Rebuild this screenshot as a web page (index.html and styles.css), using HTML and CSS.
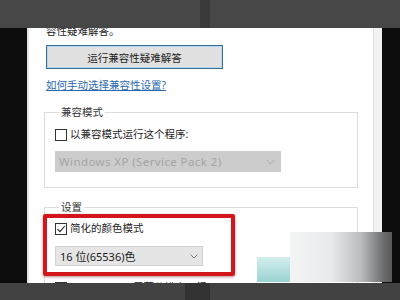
FILE: index.html
```html
<!DOCTYPE html>
<html lang="zh-CN">
<head>
    <meta charset="UTF-8">
    <title>兼容性设置</title>
    <link rel="stylesheet" href="styles.css">
</head>
<body>
    <div class="screen">
        <div class="topbar"><span class="seg"></span></div>

        <div class="middle">
            <div class="black left"></div>
            <div class="edge"></div>

            <div class="dialog">
                <p class="intro">容性疑难解答。</p>
                <button class="btn" type="button">运行兼容性疑难解答</button>
                <a class="link" href="#">如何手动选择兼容性设置?</a>

                <fieldset class="group">
                    <legend>兼容模式</legend>
                    <label class="check"><span class="box"></span>以兼容模式运行这个程序:</label>
                    <div class="select disabled">
                        <span>Windows XP (Service Pack 2)</span>
                        <svg width="9" height="6" viewBox="0 0 9 6"><path d="M0.5 0.8 L4.5 4.8 L8.5 0.8" fill="none" stroke="#a8a8a8" stroke-width="1"/></svg>
                    </div>
                </fieldset>

                <fieldset class="group settings">
                    <legend>设置</legend>
                    <div class="highlight">
                        <label class="check">
                            <span class="box">
                                <svg width="10" height="10" viewBox="0 0 10 10"><path d="M1.5 5.2 L4 7.7 L8.8 2" fill="none" stroke="#222" stroke-width="1.1"/></svg>
                            </span>简化的颜色模式</label>
                        <div class="select small">
                            <span>16 位(65536)色</span>
                            <svg width="8" height="5" viewBox="0 0 8 5"><path d="M0.5 0.6 L4 4 L7.5 0.6" fill="none" stroke="#777" stroke-width="1"/></svg>
                        </div>
                    </div>
                    <label class="check"><span class="box"></span>用 640 x 480 屏幕分辨率运行</label>
                </fieldset>
            </div>

            <div class="scroll"></div>
            <div class="black right"></div>
        </div>

        <div class="bottombar"><span class="seg"></span></div>

        <div class="mark-tail"></div>
        <div class="mark"></div>
    </div>
</body>
</html>
```

FILE: styles.css
```css
* {
    box-sizing: border-box;
}

body {
    margin: 0;
    background-color: #0d0d0d;
    font-family: "Noto Sans", "Noto Sans CJK SC", sans-serif;
    font-size: 10.5px;
    color: #1c1c1c;
}

.screen {
    position: relative;
    width: 400px;
    height: 300px;
    overflow: hidden;
    display: flex;
    flex-direction: column;
}

.topbar,
.bottombar {
    display: flex;
    flex-shrink: 0;
    background-color: #474747;
}

.topbar {
    height: 28px;
}

.topbar .seg {
    width: 10px;
    margin-left: 200px;
    background-color: #3a3a3a;
}

.bottombar {
    height: 17px;
    background-color: #424242;
}

.bottombar .seg {
    width: 25px;
    margin-left: 185px;
    background-color: #333;
}

.middle {
    display: flex;
    flex-shrink: 0;
    height: 255px;
    overflow: hidden;
}

.black {
    background-color: #0d0d0d;
}

.black.left {
    width: 27px;
}

.black.right {
    width: 18px;
}

.edge {
    width: 2px;
    background-color: #e4e4e4;
}

.dialog {
    width: 344px;
    background-color: #fff;
    padding-left: 17px;
    overflow: hidden;
}

.scroll {
    width: 9px;
    background-color: #f2f2f2;
    border-left: 1px solid #e0e0e0;
}

.intro {
    margin: -3px 0 0;
    line-height: 13px;
}

.btn {
    display: block;
    margin-top: 7px;
    width: 177px;
    height: 24px;
    padding: 0;
    font-family: inherit;
    font-size: 10.5px;
    color: #1c1c1c;
    background-color: #e1e1e1;
    border: 1px solid #3a6f9c;
    box-shadow: inset 0 0 0 1px #b5d6ee;
}

.link {
    display: block;
    margin-top: 10px;
    line-height: 13px;
    color: #2a68b0;
    text-decoration: underline;
}

.group {
    margin: 14px 0 0 -2px;
    width: 314px;
    padding: 9px 10px 15px;
    border: 1px solid #dcdcdc;
}

.group legend {
    padding: 0 2px;
    margin-left: 4px;
    line-height: 13px;
    color: #333;
}

.check {
    display: flex;
    align-items: center;
    line-height: 13px;
}

.box {
    display: flex;
    align-items: center;
    justify-content: center;
    width: 12px;
    height: 12px;
    margin-right: 3px;
    border: 1px solid #333;
    background-color: #fff;
}

.select {
    display: flex;
    align-items: center;
    justify-content: space-between;
    margin-top: 10px;
    height: 21px;
    padding: 0 4px;
}

.select.disabled {
    width: 226px;
    background-color: #cccccc;
    color: #a4a4a4;
    font-size: 11.5px;
    letter-spacing: 0.4px;
    padding-right: 6px;
}

.settings {
    margin-top: 13px;
    padding-top: 0;
}

.highlight {
    width: 192px;
    margin-left: -12px;
    padding: 4px 8px 6px;
    border: 4px solid #d3161c;
    border-radius: 2px;
    box-shadow: 0 1px 3px rgba(90, 0, 0, 0.45);
}

.select.small {
    width: 148px;
    height: 20px;
    margin-top: 11px;
    background-color: #e5e5e5;
    border: 1px solid #d2d2d2;
    font-size: 11px;
    padding-right: 4px;
}

.settings > .check {
    margin-top: 5px;
}

.mark {
    position: absolute;
    left: 290px;
    top: 232px;
    width: 102px;
    height: 50px;
    background: linear-gradient(90deg, #f3f5f5 0%, #e8eaeb 40%, #b9bbbd 70%, #6a6b6c 92%, #5a5a5a 100%);
}

.mark-tail {
    position: absolute;
    left: 257px;
    top: 257px;
    width: 33px;
    height: 25px;
    background: linear-gradient(180deg, #d4eeee 0%, #9ad3d3 100%);
}
```
